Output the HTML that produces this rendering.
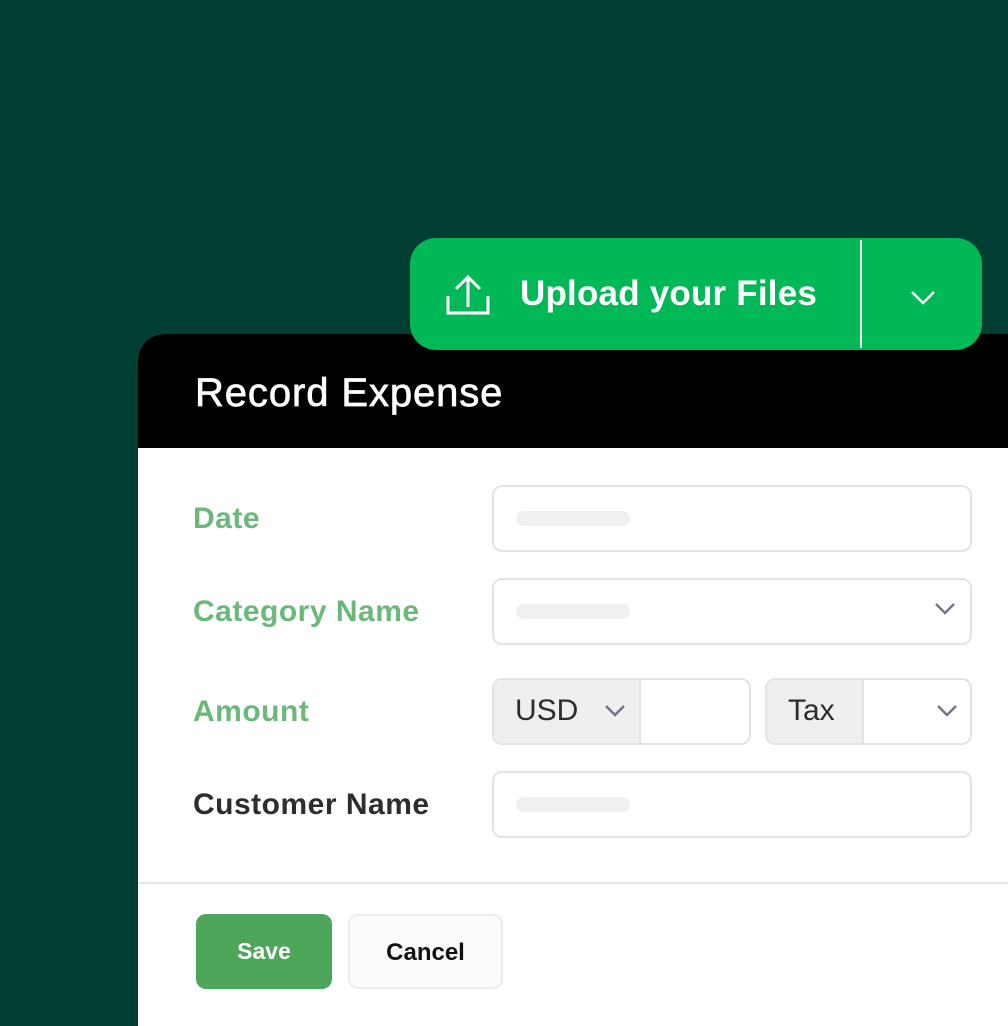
<!DOCTYPE html>
<html style="width:1008px;height:1026px;overflow:hidden"><head><style>
*{margin:0;padding:0;box-sizing:border-box}
body{width:1008px;height:1026px;background:#003d32;position:relative;overflow:hidden;font-family:"Liberation Sans",sans-serif}
.card{position:absolute;left:138px;top:334px;width:870px;height:692px;background:#fff;border-radius:26px 0 0 0;overflow:hidden}
.hdr{height:114px;background:#000;color:#fff;font-size:40px;padding:37px 0 0 57px;letter-spacing:0.9px;-webkit-text-stroke:0.7px #fff}
.lbl{position:absolute;left:55px;font-size:30px;font-weight:bold;color:#6bb87b;letter-spacing:0.5px}
.inp{position:absolute;left:354px;width:480px;height:67px;border:2px solid #e2e4e4;border-radius:10px;background:#fff}
.bar{position:absolute;left:22px;top:24px;width:114px;height:15px;border-radius:8px;background:#eff0f1}
.btn{position:absolute;left:410px;top:238px;width:572px;height:112px;background:#00b956;border-radius:26px;color:#fff}
</style></head><body>
<div class="card">
<div class="hdr">Record Expense</div>
<div class="lbl" style="top:168px">Date</div>
<div class="lbl" style="top:261px">Category Name</div>
<div class="lbl" style="top:361px">Amount</div>
<div class="lbl" style="top:454px;color:#2d2d2d">Customer Name</div>
<div class="inp" style="top:151px"><div class="bar"></div></div>
<div class="inp" style="top:244px"><div class="bar"></div>
<svg style="position:absolute;right:14px;top:22px" width="22" height="14"><path d="M2 2l9 9 9-9" fill="none" stroke="#747487" stroke-width="2.5"/></svg></div>
<div class="inp" style="top:344px;width:259px;overflow:hidden">
<div style="position:absolute;left:0;top:0;width:147px;height:100%;background:#edf0ef;border-right:2px solid #e2e4e4;font-size:30px;color:#2d2d2d;padding:14px 0 0 21px">USD</div>
<svg style="position:absolute;left:110px;top:24px" width="22" height="14"><path d="M2 2l9 9 9-9" fill="none" stroke="#747487" stroke-width="2.5"/></svg></div>
<div class="inp" style="top:344px;left:627px;width:207px;overflow:hidden">
<div style="position:absolute;left:0;top:0;width:97px;height:100%;background:#edf0ef;border-right:2px solid #e2e4e4;font-size:30px;color:#2d2d2d;padding:14px 0 0 21px">Tax</div>
<svg style="position:absolute;right:12px;top:24px" width="22" height="14"><path d="M2 2l9 9 9-9" fill="none" stroke="#747487" stroke-width="2.5"/></svg></div>
<div class="inp" style="top:437px"><div class="bar"></div></div>
<div style="position:absolute;left:0;top:548px;width:100%;height:2px;background:#e4e6e6"></div>
<div style="position:absolute;left:58px;top:580px;width:136px;height:75px;background:#4da65a;border-radius:10px;color:#fff;font-size:23px;font-weight:bold;text-align:center;line-height:75px">Save</div>
<div style="position:absolute;left:210px;top:580px;width:155px;height:75px;background:#fbfbfb;border:2px solid #eceeee;border-radius:10px;color:#111;font-size:24px;font-weight:bold;text-align:center;line-height:73px">Cancel</div>
</div>
<div class="btn">
<svg style="position:absolute;left:36px;top:36px" width="44" height="42"><path d="M22 3v30M10 15l12-12 12 12" fill="none" stroke="#fff" stroke-width="3"/><path d="M2 22v17h40V22" fill="none" stroke="#fff" stroke-width="3"/></svg>
<div style="position:absolute;left:110px;top:36px;font-size:35px;font-weight:bold;letter-spacing:0.2px">Upload your Files</div>
<div style="position:absolute;left:450px;top:2px;width:2px;height:108px;background:#fff"></div>
<svg style="position:absolute;left:500px;top:52px" width="26" height="16"><path d="M2 2l11 11 11-11" fill="none" stroke="#fff" stroke-width="2.5"/></svg>
</div>
</body></html>
